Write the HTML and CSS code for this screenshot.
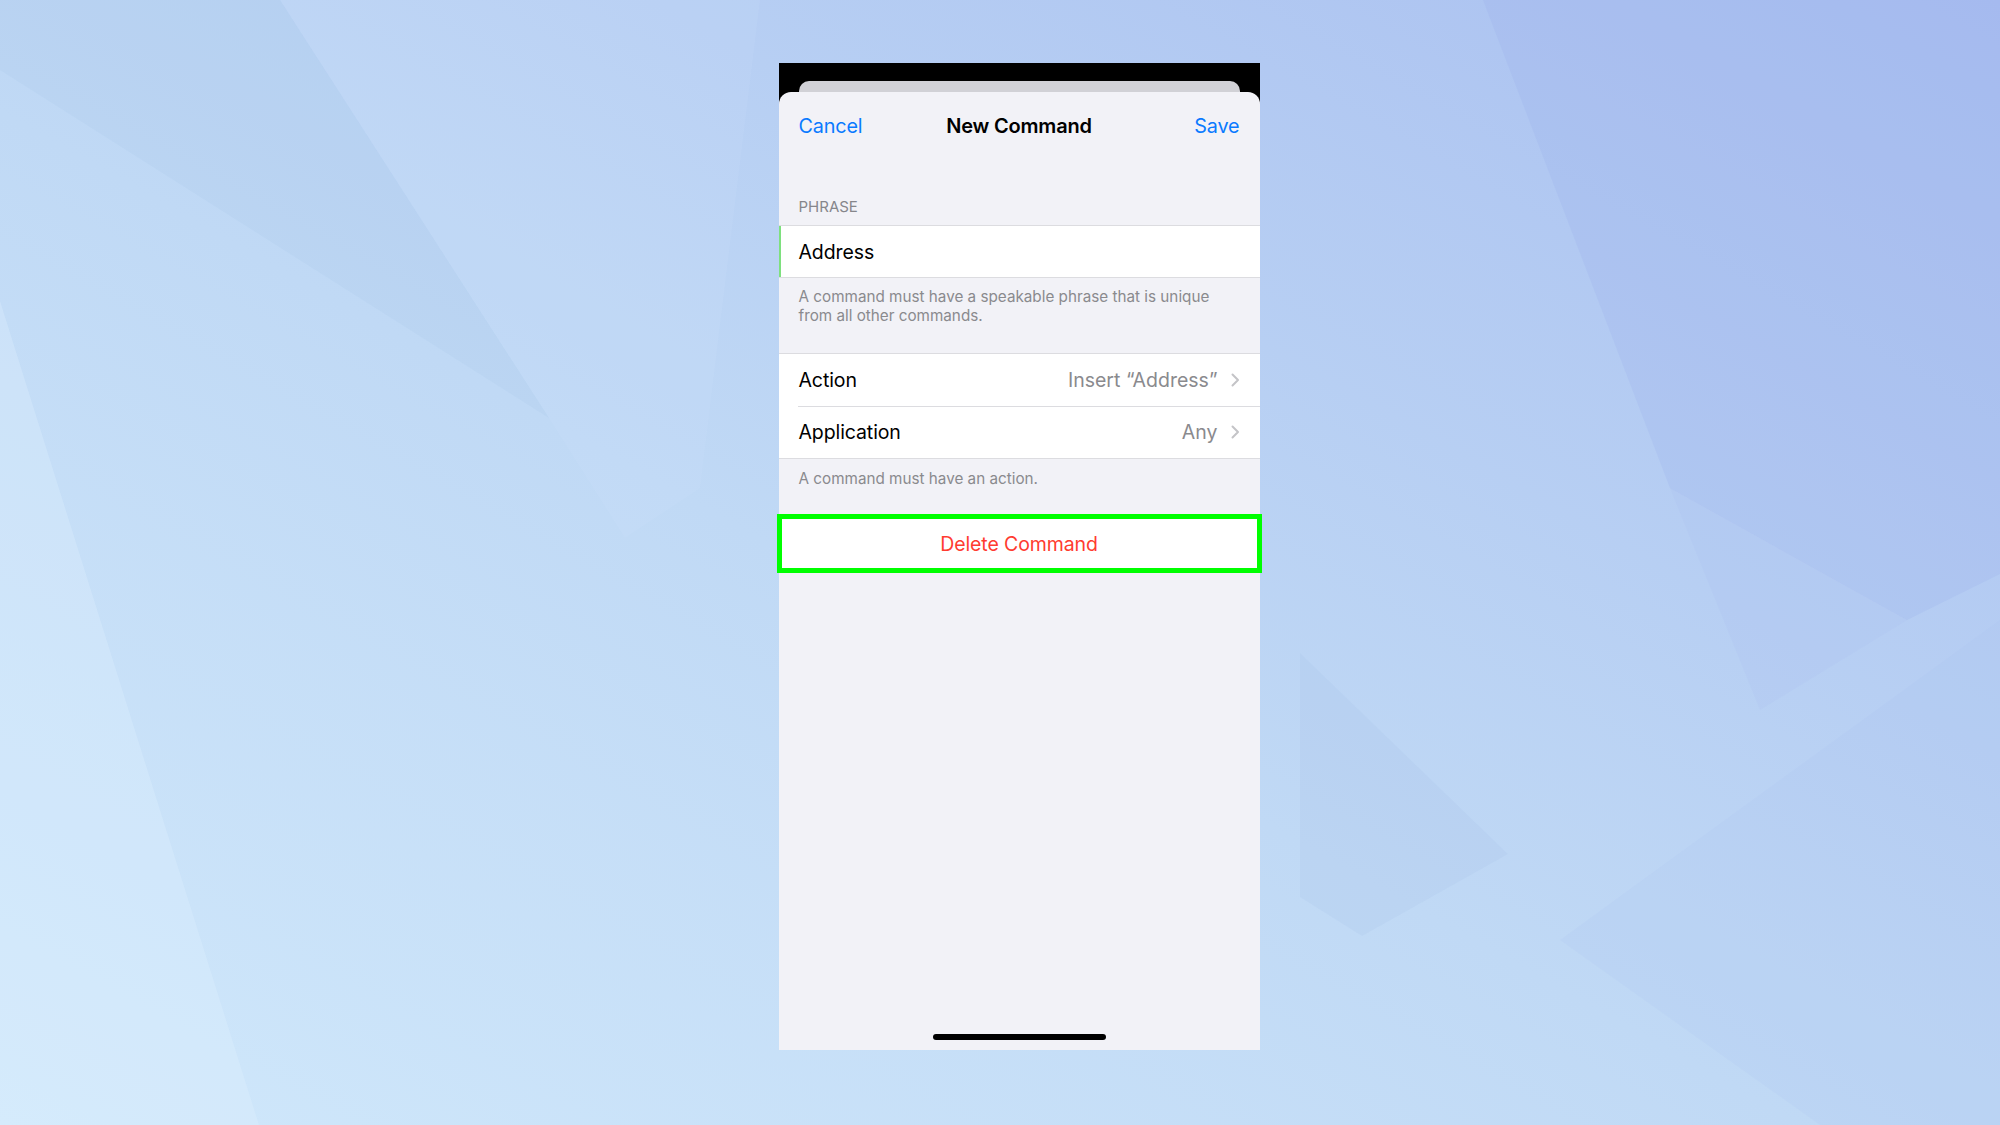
FILE: index.html
```html
<!DOCTYPE html>
<html lang="en">
<head>
<meta charset="utf-8">
<title>New Command</title>
<link rel="stylesheet" href="styles.css">
</head>
<body>
<svg class="bg-art" width="2000" height="1125" viewBox="0 0 2000 1125" aria-hidden="true">
  <defs>
    <linearGradient id="bgGrad" x1="0" y1="1" x2="1" y2="0">
      <stop offset="0" stop-color="#d0e8fb"/>
      <stop offset="0.45" stop-color="#c0d9f5"/>
      <stop offset="1" stop-color="#a9bff0"/>
    </linearGradient>
  </defs>
  <rect width="2000" height="1125" fill="url(#bgGrad)"/>
  <polygon points="0,0 280,0 549,418 0,70" fill="#9fbde0" opacity="0.14"/>
  <polygon points="0,301 259,1125 0,1125" fill="#e2f1ff" opacity="0.3"/>
  <polygon points="280,0 760,0 700,488 625,538 549,418" fill="#d6e6fb" opacity="0.12"/>
  <polygon points="1483,0 2000,0 2000,574 1907,620 1670,488" fill="#97acea" opacity="0.2"/>
  <polygon points="1670,488 1907,620 1760,710" fill="#a4b9ee" opacity="0.12"/>
  <polygon points="1300,653 1508,854 1362,936 1300,897" fill="#9eb6e6" opacity="0.14"/>
  <polygon points="1560,940 2000,620 2000,1125 1820,1125" fill="#a8bff1" opacity="0.12"/>
</svg>

<div class="stage">
  <div class="phone">
    <div class="card-back"></div>
    <div class="sheet">
      <div class="nav">
        <span class="nav-btn">Cancel</span>
        <span class="nav-title">New Command</span>
        <span class="nav-btn nav-right">Save</span>
      </div>

      <div class="group-header">PHRASE</div>
      <div class="group">
        <div class="row row-input">
          <span class="row-label">Address</span>
        </div>
      </div>
      <div class="group-footer">A command must have a speakable phrase that is unique from all other commands.</div>

      <div class="group">
        <div class="row row-tall">
          <span class="row-label">Action</span>
          <span class="row-value">Insert “Address”</span>
          <svg class="chev" width="9" height="14" viewBox="0 0 9 14"><path d="M1.5 1.5 L7 7 L1.5 12.5" fill="none" stroke="#c4c4c7" stroke-width="2" stroke-linecap="round" stroke-linejoin="round"/></svg>
        </div>
        <div class="row row-tall row-sep">
          <span class="row-label">Application</span>
          <span class="row-value">Any</span>
          <svg class="chev" width="9" height="14" viewBox="0 0 9 14"><path d="M1.5 1.5 L7 7 L1.5 12.5" fill="none" stroke="#c4c4c7" stroke-width="2" stroke-linecap="round" stroke-linejoin="round"/></svg>
        </div>
      </div>
      <div class="group-footer footer-short">A command must have an action.</div>

      <div class="delete-box">
        <span class="delete-text">Delete Command</span>
      </div>

      <div class="spacer"></div>
      <div class="home-indicator"></div>
    </div>
  </div>
</div>
</body>
</html>
```

FILE: styles.css
```css
* { box-sizing: border-box; }

html, body {
  margin: 0;
  padding: 0;
  width: 2000px;
  height: 1125px;
  overflow: hidden;
}

body {
  position: relative;
  font-family: Inter, "Liberation Sans", "Noto Sans", sans-serif;
  background: #c2d9f5;
}

.bg-art {
  position: absolute;
  left: 0;
  top: 0;
  z-index: 0;
}

.stage {
  position: relative;
  z-index: 1;
  display: flex;
  flex-direction: column;
  align-items: center;
  padding-top: 63px;
  padding-left: 38px;
}

.phone {
  width: 481px;
  height: 987px;
  background: #000;
  display: flex;
  flex-direction: column;
}

.card-back {
  margin: 18px 20px 0;
  height: 11px;
  background: #d1d1d6;
  border-radius: 10px 10px 0 0;
}

.sheet {
  flex: 1;
  background: #f2f2f7;
  border-radius: 12px 12px 0 0;
  display: flex;
  flex-direction: column;
}

.nav {
  height: 68px;
  padding: 0 20px;
  display: grid;
  grid-template-columns: 1fr auto 1fr;
  align-items: center;
}

.nav-btn {
  color: #0a7aff;
  font-size: 19.8px;
  letter-spacing: -0.15px;
}

.nav-right { justify-self: end; }

.nav-title {
  font-size: 20px;
  font-weight: 600;
  color: #000;
  letter-spacing: -0.2px;
}

.group-header {
  padding: 38px 20px 9px;
  font-size: 15px;
  line-height: 18px;
  color: #86868b;
}

.group {
  background: #fff;
  border-top: 1px solid #dcdce0;
  border-bottom: 1px solid #dcdce0;
}

.row {
  height: 51px;
  padding: 0 20px;
  display: flex;
  align-items: center;
  gap: 10px;
}

.row-tall { height: 52px; }

.row-input {
  box-shadow: inset 2px 0 0 #7ee07e;
}

.row-sep {
  position: relative;
}

.row-sep::before {
  content: "";
  position: absolute;
  left: 19px;
  right: 0;
  top: 0;
  border-top: 1px solid #dcdce0;
}

.row-label {
  font-size: 19.5px;
  color: #000;
  flex: 1;
  letter-spacing: -0.1px;
}

.row-value {
  font-size: 19.5px;
  color: #8a8a8e;
  letter-spacing: 0;
}

.chev { flex: none; margin-left: 3px; }

.group-footer {
  padding: 9px 40px 28px 20px;
  font-size: 15.25px;
  line-height: 19px;
  color: #8a8a8e;
}

.footer-short { padding-top: 10px; padding-bottom: 26px; }

.delete-box {
  margin: 0 -2px;
  height: 59px;
  border: 5px solid #00ff00;
  background: #fff;
  display: flex;
  align-items: center;
  justify-content: center;
}

.delete-text {
  color: #ff3b30;
  font-size: 19.5px;
  letter-spacing: -0.1px;
}

.spacer { flex: 1; }

.home-indicator {
  align-self: center;
  width: 173px;
  height: 6px;
  border-radius: 3px;
  background: #000;
  margin-bottom: 10px;
}
```
